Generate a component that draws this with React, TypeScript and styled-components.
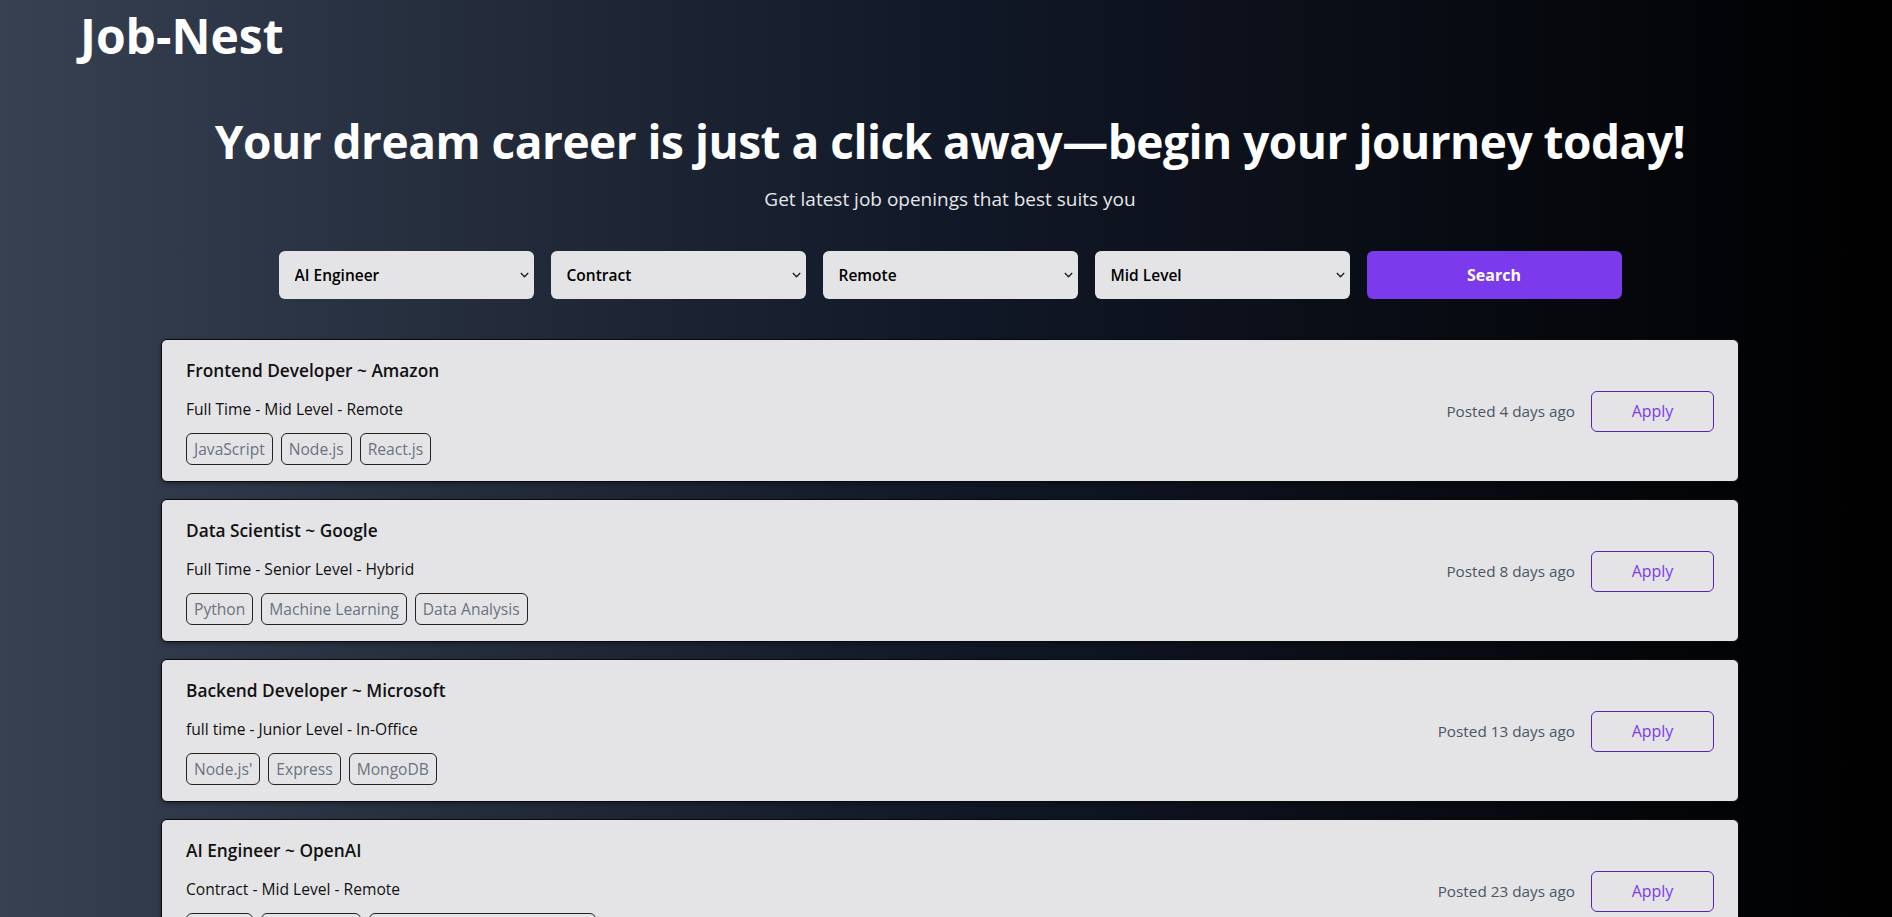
import styled, { createGlobalStyle } from 'styled-components'

const GlobalStyle = createGlobalStyle`
  html, body {
    margin: 0;
    padding: 0;
  }
  body {
    font-family: "Open Sans", "Noto Sans", sans-serif;
    background: #000;
  }
  * {
    box-sizing: border-box;
  }
`

const Page = styled.div`
  min-height: 100vh;
  padding: 0 0 40px 8px;
  background: linear-gradient(to right, #374151, #111827, #000000);
  color: #fff;
`

const Header = styled.header`
  padding: 12px 0 0 72px;
`

const Logo = styled.h1`
  margin: 0;
  font-size: 48px;
  line-height: 48px;
  font-weight: 700;
`

const Hero = styled.section`
  display: flex;
  flex-direction: column;
  align-items: center;
  margin-top: 57px;
`

const Headline = styled.h2`
  margin: 0;
  font-size: 46px;
  line-height: 48px;
  font-weight: 700;
  letter-spacing: -0.5px;
  text-align: center;
`

const Tagline = styled.p`
  margin: 20px 0 0;
  font-size: 19px;
  line-height: 28px;
  color: #e5e7eb;
`

const Filters = styled.div`
  display: grid;
  grid-template-columns: repeat(5, 255px);
  gap: 17px;
  margin-top: 38px;
`

const SelectWrap = styled.div`
  position: relative;
`

const Select = styled.select`
  appearance: none;
  width: 100%;
  height: 48px;
  border: none;
  border-radius: 6px;
  background: #e4e4e7;
  padding: 0 28px 0 16px;
  font-family: inherit;
  font-size: 15.5px;
  font-weight: 600;
  color: #000;
  outline: none;
`

const Chevron = styled.svg`
  position: absolute;
  right: 5px;
  top: 50%;
  transform: translateY(-50%);
  pointer-events: none;
`

const SearchButton = styled.button`
  height: 48px;
  border: none;
  border-radius: 6px;
  background: #7c3aed;
  color: #fff;
  font-family: inherit;
  font-size: 16px;
  font-weight: 700;
`

const JobList = styled.div`
  display: flex;
  flex-direction: column;
  gap: 17px;
  margin: 40px 153px 0;
`

const Card = styled.article`
  display: flex;
  align-items: center;
  justify-content: space-between;
  padding: 17px 24px 16px;
  background: #e4e4e7;
  border: 1px solid #0b0b0b;
  border-radius: 6px;
  color: #000;
  box-shadow: 0 2px 4px rgba(0, 0, 0, 0.3);
`

const CardInfo = styled.div`
  display: flex;
  flex-direction: column;
`

const JobTitle = styled.h3`
  margin: 0;
  font-size: 17.3px;
  line-height: 28px;
  font-weight: 600;
  color: #111;
`

const JobMeta = styled.p`
  margin: 12px 0 0;
  font-size: 15.6px;
  line-height: 24px;
  color: #111;
`

const Tags = styled.div`
  display: flex;
  gap: 8px;
  margin-top: 12px;
`

const Tag = styled.span`
  padding: 3px 7px;
  border: 1px solid #222;
  border-radius: 6px;
  font-size: 15.6px;
  line-height: 24px;
  color: #6b7280;
`

const CardActions = styled.div`
  display: flex;
  align-items: center;
  gap: 16px;
`

const Posted = styled.span`
  font-size: 15.3px;
  color: #4b5563;
`

const ApplyButton = styled.button`
  width: 123px;
  height: 41px;
  border: 1px solid #5b21b6;
  border-radius: 6px;
  background: transparent;
  color: #7c3aed;
  font-family: inherit;
  font-size: 16px;
`

const filters = [
  ['AI Engineer', 'Frontend Developer', 'Backend Developer', 'Data Scientist'],
  ['Contract', 'Full Time', 'Part Time', 'Internship'],
  ['Remote', 'Hybrid', 'In-Office'],
  ['Mid Level', 'Junior Level', 'Senior Level'],
]

const jobs = [
  {
    title: 'Frontend Developer ~ Amazon',
    meta: 'Full Time - Mid Level - Remote',
    tags: ['JavaScript', 'Node.js', 'React.js'],
    posted: 'Posted 4 days ago',
  },
  {
    title: 'Data Scientist ~ Google',
    meta: 'Full Time - Senior Level - Hybrid',
    tags: ['Python', 'Machine Learning', 'Data Analysis'],
    posted: 'Posted 8 days ago',
  },
  {
    title: 'Backend Developer ~ Microsoft',
    meta: 'full time - Junior Level - In-Office',
    tags: ["Node.js'", 'Express', 'MongoDB'],
    posted: 'Posted 13 days ago',
  },
  {
    title: 'AI Engineer ~ OpenAI',
    meta: 'Contract - Mid Level - Remote',
    tags: ['Python', 'TensorFlow', 'Natural Language Processing'],
    posted: 'Posted 23 days ago',
  },
]

export default function App() {
  return (
    <>
      <GlobalStyle />
      <Page>
        <Header>
          <Logo>Job-Nest</Logo>
        </Header>
        <Hero>
          <Headline>Your dream career is just a click away—begin your journey today!</Headline>
          <Tagline>Get latest job openings that best suits you</Tagline>
          <Filters>
            {filters.map(options => (
              <SelectWrap key={options[0]}>
                <Select defaultValue={options[0]}>
                  {options.map(o => (
                    <option key={o}>{o}</option>
                  ))}
                </Select>
                <Chevron width="9" height="6" viewBox="0 0 9 6">
                  <path d="M0.8 1 L4.5 4.7 L8.2 1" fill="none" stroke="#222" strokeWidth="1.4" />
                </Chevron>
              </SelectWrap>
            ))}
            <SearchButton>Search</SearchButton>
          </Filters>
        </Hero>
        <JobList>
          {jobs.map(job => (
            <Card key={job.title}>
              <CardInfo>
                <JobTitle>{job.title}</JobTitle>
                <JobMeta>{job.meta}</JobMeta>
                <Tags>
                  {job.tags.map(t => (
                    <Tag key={t}>{t}</Tag>
                  ))}
                </Tags>
              </CardInfo>
              <CardActions>
                <Posted>{job.posted}</Posted>
                <ApplyButton>Apply</ApplyButton>
              </CardActions>
            </Card>
          ))}
        </JobList>
      </Page>
    </>
  )
}
